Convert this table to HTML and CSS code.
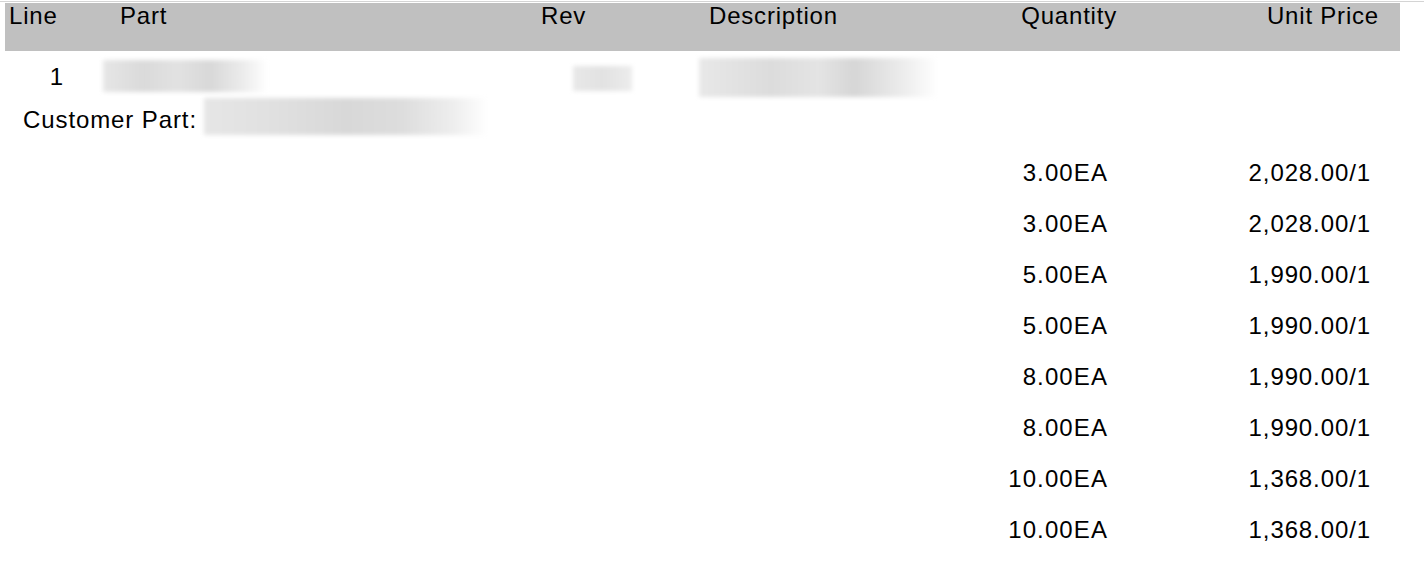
FILE: index.html
```html
<!DOCTYPE html>
<html lang="en">
<head>
  <meta charset="UTF-8" />
  <title>Order Lines</title>
  <link rel="stylesheet" href="styles.css">
</head>
<body>
  <div class="top-rule"></div>

  <div class="line-head">
    <div class="head-cell head-line">Line</div>
    <div class="head-cell head-part">Part</div>
    <div class="head-cell head-rev">Rev</div>
    <div class="head-cell head-desc">Description</div>
    <div class="head-cell head-qty">Quantity</div>
    <div class="head-cell head-price">Unit Price</div>
  </div>

  <div class="line-row">
    <div class="line-no">1</div>
    <div><div class="redacted redacted-part"></div></div>
    <div><div class="redacted redacted-rev"></div></div>
    <div><div class="redacted redacted-desc"></div></div>
    <div></div>
    <div></div>
  </div>

  <div class="customer-row">
    <span class="customer-label">Customer Part:</span>
    <div class="redacted redacted-customer"></div>
  </div>

  <div class="price-breaks">
    <div class="break-row"><span class="qty">3.00EA</span><span class="price">2,028.00/1</span></div>
    <div class="break-row"><span class="qty">3.00EA</span><span class="price">2,028.00/1</span></div>
    <div class="break-row"><span class="qty">5.00EA</span><span class="price">1,990.00/1</span></div>
    <div class="break-row"><span class="qty">5.00EA</span><span class="price">1,990.00/1</span></div>
    <div class="break-row"><span class="qty">8.00EA</span><span class="price">1,990.00/1</span></div>
    <div class="break-row"><span class="qty">8.00EA</span><span class="price">1,990.00/1</span></div>
    <div class="break-row"><span class="qty">10.00EA</span><span class="price">1,368.00/1</span></div>
    <div class="break-row"><span class="qty">10.00EA</span><span class="price">1,368.00/1</span></div>
  </div>
</body>
</html>
```

FILE: styles.css
```css
:root {
  --head-bg: #c0c0c0;
  --rule: #d4d4d4;
  --text: #000000;
}

body {
  margin: 0;
  font-family: 'Liberation Sans', Arial, sans-serif;
  font-size: 24px;
  color: var(--text);
  background: #ffffff;
}

.top-rule {
  height: 1px;
  margin-top: 1px;
  margin-bottom: 1px;
  background: var(--rule);
}

/* Header bar */
.line-head {
  display: grid;
  grid-template-columns: 95px 440px 159px 261px 160px 280px;
  width: 1395px;
  height: 48px;
  margin-left: 5px;
  background: var(--head-bg);
  line-height: 25px;
  letter-spacing: 0.8px;
}

.head-line { padding-left: 4px; }
.head-part { padding-left: 20px; }
.head-rev { padding-left: 1px; }
.head-desc { padding-left: 10px; }
.head-qty { text-align: right; padding-right: 3px; }
.head-price { text-align: right; padding-right: 21px; }

/* Line row */
.line-row {
  display: grid;
  grid-template-columns: 100px 440px 159px 261px 160px 280px;
  width: 1400px;
  align-items: start;
  line-height: 52px;
  letter-spacing: 0.9px;
}

.line-no {
  text-align: right;
  padding-right: 36px;
}

/* blurred-out values */
.redacted {
  filter: blur(2px);
}

.redacted-part {
  width: 165px;
  height: 32px;
  margin: 9px 0 0 3px;
  background: linear-gradient(90deg, #e6e6e6 0%, #dadada 25%, #e2e2e2 45%, #d8d8d8 65%, #ececec 85%, #ffffff 100%);
}

.redacted-rev {
  width: 59px;
  height: 25px;
  margin: 15px 0 0 33px;
  background: linear-gradient(90deg, #e8e8e8 0%, #e2e2e2 50%, #ececec 100%);
}

.redacted-desc {
  width: 239px;
  height: 39px;
  margin-top: 7px;
  background: linear-gradient(90deg, #e8e8e8 0%, #dcdcdc 30%, #e4e4e4 50%, #d6d6d6 65%, #ececec 85%, #ffffff 100%);
}

.customer-row {
  display: flex;
  align-items: flex-start;
  height: 34px;
  line-height: 34px;
  letter-spacing: 0.9px;
}

.customer-label {
  padding-left: 23px;
}

.redacted-customer {
  width: 284px;
  height: 37px;
  margin: -5px 0 0 7px;
  background: linear-gradient(90deg, #e6e6e6 0%, #e0e0e0 25%, #d8d8d8 50%, #dddddd 70%, #eeeeee 88%, #ffffff 100%);
}

/* Quantity / price breaks */
.price-breaks {
  margin-top: 10px;
}

.break-row {
  display: grid;
  grid-template-columns: 960px 160px 280px;
  width: 1400px;
  line-height: 51px;
  letter-spacing: 1.1px;
}

.qty {
  grid-column: 2;
  text-align: right;
  padding-right: 12px;
}

.price {
  grid-column: 3;
  text-align: right;
  padding-right: 29px;
  letter-spacing: 0.9px;
}
```
